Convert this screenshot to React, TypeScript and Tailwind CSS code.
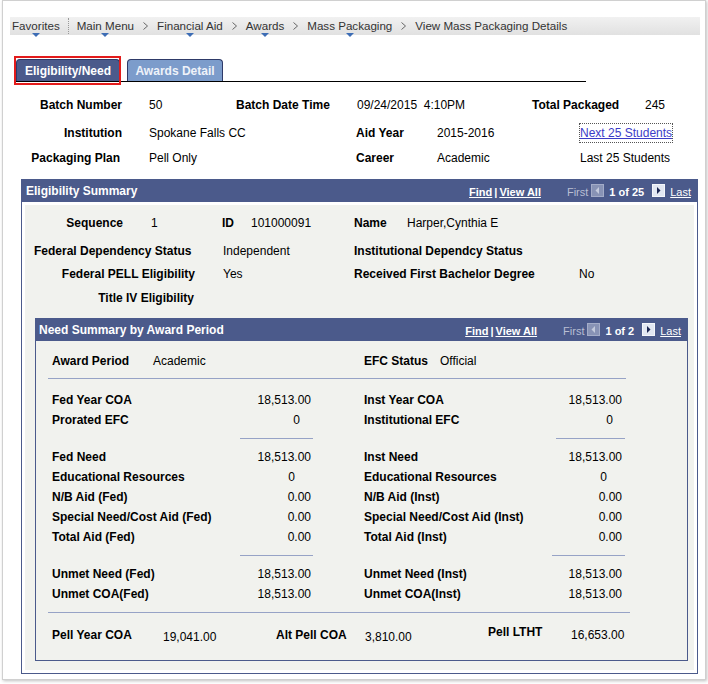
import React from 'react'

const BLUE = 'bg-[#4b5a8b]'

function Chevron() {
  return (
    <svg width="5" height="8" viewBox="0 0 5 8" className="mx-[9px] shrink-0">
      <path d="M0.5 0.5 L4.5 4 L0.5 7.5" fill="none" stroke="#666" strokeWidth="1" />
    </svg>
  )
}

function NavItem({ label, menu = true }: { label: string; menu?: boolean }) {
  return (
    <span className="relative h-full flex items-center">
      {label}
      {menu && (
        <svg width="8" height="4" viewBox="0 0 8 4" className="absolute left-1/2 -translate-x-1/2 -bottom-[2px]">
          <path d="M0 0 L8 0 L4 4 Z" fill="#3d6db5" />
        </svg>
      )}
    </span>
  )
}

function ArrowBtn({ dir, enabled }: { dir: 'left' | 'right'; enabled: boolean }) {
  return (
    <svg width="13" height="13" viewBox="0 0 13 13" className="shrink-0">
      <rect x="0.5" y="0.5" width="12" height="12" fill={enabled ? '#e2e7f2' : '#8893b5'} stroke={enabled ? '#f4f6fb' : '#a3acc8'} />
      {dir === 'left' ? (
        <path d="M8 3 L8 10 L4.5 6.5 Z" fill={enabled ? '#1b2652' : '#c4cbdd'} />
      ) : (
        <path d="M5 3 L5 10 L8.5 6.5 Z" fill={enabled ? '#1b2652' : '#c4cbdd'} />
      )}
    </svg>
  )
}

function GridNav({ count }: { count: string }) {
  return (
    <div className="flex items-center text-[11px] text-white pt-[3px]">
      <span className="font-bold underline">Find</span>
      <span className="font-bold mx-[2px]">|</span>
      <span className="font-bold underline">View All</span>
      <span className="ml-[26px] text-[#b9bfd3]">First</span>
      <span className="ml-[3px] -mt-[5px]"><ArrowBtn dir="left" enabled={false} /></span>
      <span className="ml-[5px] font-bold">{count}</span>
      <span className="ml-[8px] -mt-[5px]"><ArrowBtn dir="right" enabled={true} /></span>
      <span className="ml-[5px] underline">Last</span>
    </div>
  )
}

function HLine({ className }: { className: string }) {
  return <div className={`border-t border-[#97a3c6] ${className}`} />
}

type Row = { l: string; lv: string; lpr?: string; r: string; rv: string; rpr?: string }

function NeedRow({ row }: { row: Row }) {
  return (
    <div className="flex items-center h-[20px] pl-[16px]">
      <span className="w-[188px] font-bold">{row.l}</span>
      <span className={`w-[71px] text-right ${row.lpr ?? ''}`}>{row.lv}</span>
      <span className="w-[53px]" />
      <span className="w-[187px] font-bold">{row.r}</span>
      <span className={`w-[71px] text-right ${row.rpr ?? ''}`}>{row.rv}</span>
    </div>
  )
}

const block1: Row[] = [
  { l: 'Fed Year COA', lv: '18,513.00', r: 'Inst Year COA', rv: '18,513.00' },
  { l: 'Prorated EFC', lv: '0', lpr: 'pr-[11px]', r: 'Institutional EFC', rv: '0', rpr: 'pr-[9px]' },
]

const block2: Row[] = [
  { l: 'Fed Need', lv: '18,513.00', r: 'Inst Need', rv: '18,513.00' },
  { l: 'Educational Resources', lv: '0', lpr: 'pr-[16px]', r: 'Educational Resources', rv: '0', rpr: 'pr-[15px]' },
  { l: 'N/B Aid (Fed)', lv: '0.00', r: 'N/B Aid (Inst)', rv: '0.00' },
  { l: 'Special Need/Cost Aid (Fed)', lv: '0.00', r: 'Special Need/Cost Aid (Inst)', rv: '0.00' },
  { l: 'Total Aid (Fed)', lv: '0.00', r: 'Total Aid (Inst)', rv: '0.00' },
]

const block3: Row[] = [
  { l: 'Unmet Need (Fed)', lv: '18,513.00', r: 'Unmet Need (Inst)', rv: '18,513.00' },
  { l: 'Unmet COA(Fed)', lv: '18,513.00', r: 'Unmet COA(Inst)', rv: '18,513.00' },
]

export default function App() {
  return (
    <div className="w-[708px] h-[684px] bg-white text-black text-[12px] font-['Liberation_Sans',Arial,sans-serif] overflow-hidden">
      <div className="ml-[2px] w-[704px] h-[680px] border border-[#d0d0d0] shadow-[1px_1px_3px_rgba(0,0,0,0.25)] flex flex-col">
        {/* Breadcrumb bar */}
        <div className="mt-[16px] ml-[7px] w-[690px] h-[18px] bg-gradient-to-b from-[#f1f1f1] to-[#e1e1e1] flex items-center pl-[2px] text-[#333] text-[11.6px]">
          <NavItem label="Favorites" />
          <span className="mx-[8px] h-[16px] border-l border-dotted border-[#999]" />
          <NavItem label="Main Menu" />
          <Chevron />
          <NavItem label="Financial Aid" />
          <Chevron />
          <NavItem label="Awards" />
          <Chevron />
          <NavItem label="Mass Packaging" />
          <Chevron />
          <NavItem label="View Mass Packaging Details" menu={false} />
        </div>

        {/* Tabs */}
        <div className="mt-[24px] ml-[11px] w-[572px] border-b border-black flex items-end pl-[2px] h-[23px]">
          <div className="relative">
            <div className={`w-[104px] h-[22px] ${BLUE} border border-[#2e3a68] border-b-0 rounded-t-[4px] text-white font-bold flex items-center justify-center`}>
              Eligibility/Need
            </div>
            <div className="absolute -left-[2px] -top-[3px] w-[107px] h-[29px] border-2 border-[#e31b1b]" />
          </div>
          <div className="ml-[7px] w-[96px] h-[22px] bg-[#7c9ccb] border border-[#2e3a68] border-b-0 rounded-t-[4px] text-[#eef2f9] font-bold flex items-center justify-center">
            Awards Detail
          </div>
        </div>

        {/* Header fields */}
        <div className="mt-[13px] flex items-center h-[20px]">
          <span className="w-[119px] text-right font-bold">Batch Number</span>
          <span className="w-[114px] pl-[27px]">50</span>
          <span className="w-[121px] font-bold">Batch Date Time</span>
          <span className="w-[175px] whitespace-pre">09/24/2015  4:10PM</span>
          <span className="w-[113px] font-bold">Total Packaged</span>
          <span>245</span>
        </div>
        <div className="mt-[8px] flex items-center h-[20px]">
          <span className="w-[119px] text-right font-bold">Institution</span>
          <span className="w-[234px] pl-[27px]">Spokane Falls CC</span>
          <span className="w-[81px] font-bold">Aid Year</span>
          <span className="w-[143px]">2015-2016</span>
          <span className="text-[#3c3cc8] underline outline outline-1 outline-dotted outline-[#555]">Next 25 Students</span>
        </div>
        <div className="mt-[5px] flex items-center h-[20px]">
          <span className="w-[117px] text-right font-bold">Packaging Plan</span>
          <span className="w-[236px] pl-[29px]">Pell Only</span>
          <span className="w-[81px] font-bold">Career</span>
          <span className="w-[143px]">Academic</span>
          <span>Last 25 Students</span>
        </div>

        {/* Eligibility Summary */}
        <div className="mt-[11px] ml-[18px] w-[677px] h-[495px] border border-[#4b5a8b] flex flex-col">
          <div className={`h-[22px] ${BLUE} flex items-center justify-between pl-[4px] pr-[6px]`}>
            <span className="text-white font-bold">Eligibility Summary</span>
            <GridNav count="1 of 25" />
          </div>
          <div className="flex-1 bg-white p-[3px]">
            <div className="h-full bg-[#f1f2ee] flex flex-col">
              <div className="mt-[8px] flex items-center h-[20px]">
                <span className="w-[98px] text-right font-bold">Sequence</span>
                <span className="w-[99px] pl-[28px]">1</span>
                <span className="w-[29px] font-bold">ID</span>
                <span className="w-[103px]">101000091</span>
                <span className="w-[53px] font-bold">Name</span>
                <span>Harper,Cynthia E</span>
              </div>
              <div className="mt-[8px] flex items-center h-[20px]">
                <span className="w-[198px] pl-[9px] font-bold">Federal Dependency Status</span>
                <span className="w-[131px]">Independent</span>
                <span className="font-bold">Institutional Dependcy Status</span>
              </div>
              <div className="mt-[3px] flex items-center h-[20px]">
                <span className="w-[170px] text-right font-bold">Federal PELL Eligibility</span>
                <span className="w-[159px] pl-[28px]">Yes</span>
                <span className="w-[225px] font-bold">Received First Bachelor Degree</span>
                <span>No</span>
              </div>
              <div className="mt-[4px] flex items-center h-[20px]">
                <span className="w-[169px] text-right font-bold">Title IV Eligibility</span>
              </div>

              {/* Need Summary */}
              <div className="mt-[10px] ml-[10px] w-[653px] h-[343px] border border-[#4b5a8b] flex flex-col">
                <div className={`h-[22px] ${BLUE} flex items-center justify-between pl-[3px] pr-[6px]`}>
                  <span className="text-white font-bold">Need Summary by Award Period</span>
                  <GridNav count="1 of 2" />
                </div>
                <div className="mt-[10px] flex items-center h-[20px] pl-[16px]">
                  <span className="w-[101px] font-bold">Award Period</span>
                  <span className="w-[211px]">Academic</span>
                  <span className="w-[76px] font-bold">EFC Status</span>
                  <span>Official</span>
                </div>
                <HLine className="mt-[7px] ml-[12px] w-[578px]" />
                <div className="mt-[11px]">
                  {block1.map(r => <NeedRow key={r.l} row={r} />)}
                </div>
                <div className="mt-[8px] flex">
                  <HLine className="ml-[204px] w-[73px]" />
                  <HLine className="ml-[243px] w-[69px]" />
                </div>
                <div className="mt-[8px]">
                  {block2.map(r => <NeedRow key={r.l} row={r} />)}
                </div>
                <div className="mt-[8px] flex">
                  <HLine className="ml-[204px] w-[73px]" />
                  <HLine className="ml-[239px] w-[73px]" />
                </div>
                <div className="mt-[8px]">
                  {block3.map(r => <NeedRow key={r.l} row={r} />)}
                </div>
                <HLine className="mt-[8px] ml-[12px] w-[582px]" />
                <div className="mt-[12px] flex items-center h-[20px] pl-[16px]">
                  <span className="w-[111px] font-bold">Pell Year COA</span>
                  <span className="w-[113px] mt-[4px]">19,041.00</span>
                  <span className="w-[89px] font-bold">Alt Pell COA</span>
                  <span className="w-[123px] mt-[4px]">3,810.00</span>
                  <span className="w-[83px] font-bold mb-[6px]">Pell LTHT</span>
                  <span>16,653.00</span>
                </div>
              </div>
            </div>
          </div>
        </div>
      </div>
    </div>
  )
}
